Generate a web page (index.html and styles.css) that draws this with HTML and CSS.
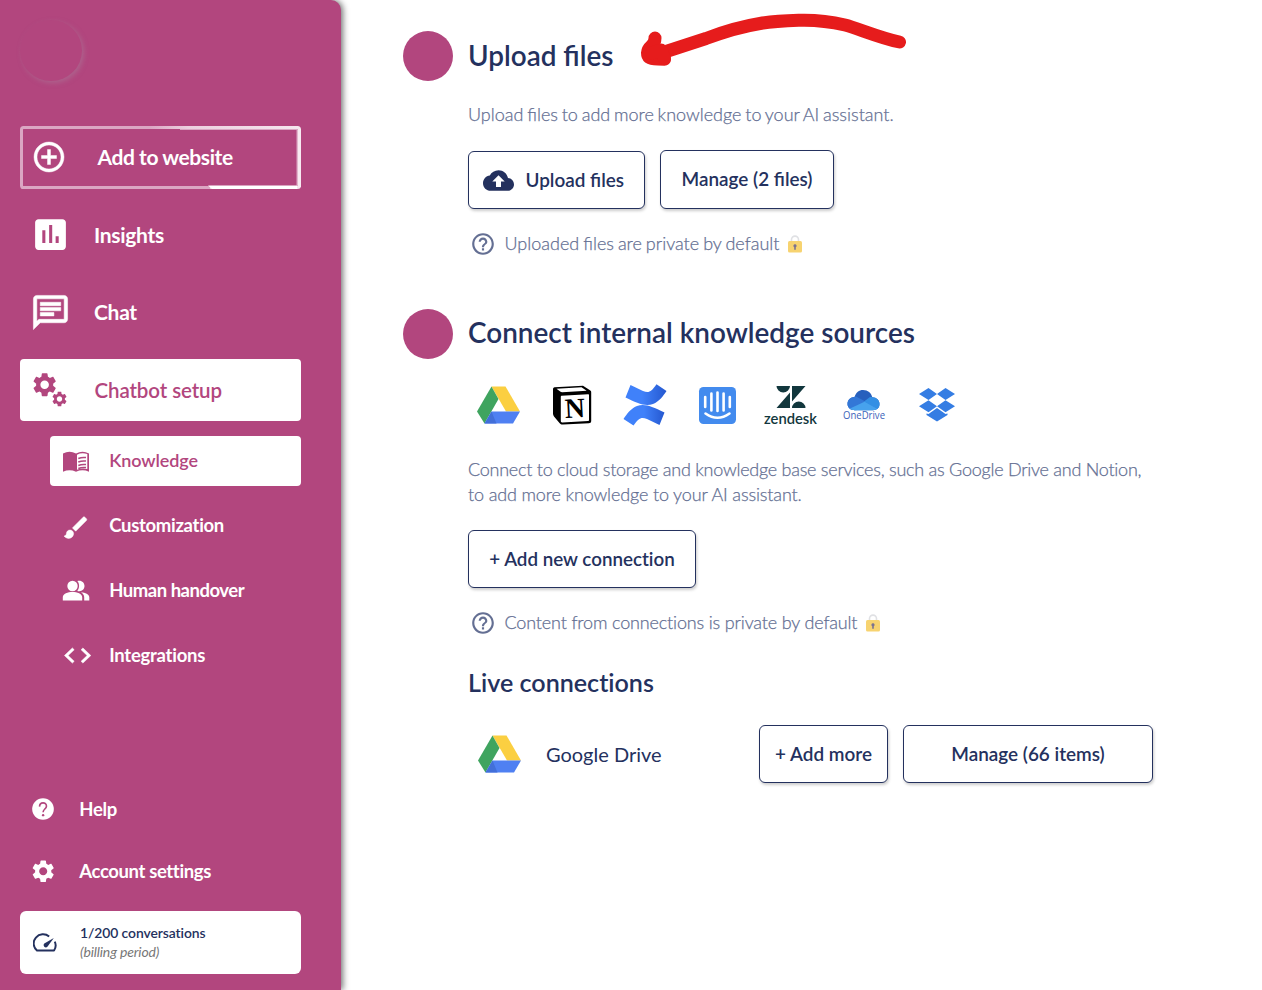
FILE: index.html
```html
<!DOCTYPE html>
<html lang="en">
<head>
<meta charset="utf-8">
<title>Knowledge</title>
<link rel="stylesheet" href="styles.css">
</head>
<body>
<svg class="defs" width="0" height="0" aria-hidden="true">
  <symbol id="gear" viewBox="0 0 24 24"><path d="M19.14 12.94c.04-.3.06-.61.06-.94 0-.32-.02-.64-.07-.94l2.03-1.58c.18-.14.23-.41.12-.61l-1.92-3.32c-.12-.22-.37-.29-.59-.22l-2.39.96c-.5-.38-1.03-.7-1.62-.94l-.36-2.54c-.04-.24-.24-.41-.48-.41h-3.84c-.24 0-.43.17-.47.41l-.36 2.54c-.59.24-1.13.57-1.62.94l-2.39-.96c-.22-.08-.47 0-.59.22L2.74 8.87c-.12.21-.08.47.12.61l2.03 1.58c-.05.3-.09.63-.09.94s.02.64.07.94l-2.03 1.58c-.18.14-.23.41-.12.61l1.92 3.32c.12.22.37.29.59.22l2.39-.96c.5.38 1.03.7 1.62.94l.36 2.54c.05.24.24.41.48.41h3.84c.24 0 .44-.17.47-.41l.36-2.54c.59-.24 1.13-.56 1.62-.94l2.39.96c.22.08.47 0 .59-.22l1.92-3.32c.12-.22.07-.47-.12-.61l-2.01-1.58zM12 15.6c-1.98 0-3.6-1.62-3.6-3.6s1.62-3.6 3.6-3.6 3.6 1.62 3.6 3.6-1.62 3.6-3.6 3.6z"/></symbol>
  <symbol id="help-outline" viewBox="0 0 24 24"><path d="M11 18h2v-2h-2v2zm1-16C6.48 2 2 6.480 2 12s4.480 10 10 10 10-4.480 10-10S17.520 2 12 2zm0 18c-4.410 0-8-3.590-8-8s3.590-8 8-8 8 3.590 8 8-3.590 8-8 8zm0-14c-2.210 0-4 1.790-4 4h2c0-1.100.9-2 2-2s2 .9 2 2c0 2-3 1.750-3 5h2c0-2.250 3-2.500 3-5 0-2.210-1.790-4-4-4z"/></symbol>
  <symbol id="lock" viewBox="0 0 14 18"><path d="M3.500 7V4.600a3.500 3.500 0 0 1 7 0V7" fill="none" stroke="#e0e1e4" stroke-width="1.600"/><rect y="6" width="14" height="11.500" rx="1.500" fill="#f7d370"/><path d="M7 9.200a1.600 1.600 0 0 1 .8 3v2.600H6.200v-2.600a1.600 1.600 0 0 1 .8-3z" fill="#7b7290"/></symbol>
  <symbol id="drive" viewBox="0 0 43 38"><path d="M14.500.5h14L43 25.500H29z" fill="#fbcf41"/><path d="M14.500.5 21.500 13 7.500 37.500 0 25.500z" fill="#3fa45f"/><path d="M14.500 25.500H43L36 37.500H7.500z" fill="#4f80f2"/><path d="m14.500 25.500 5 12h-12z" fill="#426fd9"/></symbol>
</svg>
<div class="app">
  <aside class="sidebar">
    <div class="avatar"></div>
    <nav class="nav">
      <a class="item item-add">
        <svg class="add-frame" viewBox="0 0 281 63">
          <defs><linearGradient id="frame"><stop offset="0" stop-color="#dba6c3"/><stop offset=".46" stop-color="#dba6c3"/><stop offset=".6" stop-color="#ecd0df"/><stop offset="1" stop-color="#f5e6ee"/></linearGradient></defs>
          <rect x="1.500" y="1.500" width="278" height="60" rx="2" fill="none" stroke="url(#frame)" stroke-width="3"/>
          <path d="M190 61.500H1.500" stroke="#dba6c3" stroke-width="3" fill="none"/>
          <path d="M277 4v55.500M160 3.500h117" stroke="#dba6c3" fill="none"/>
          <path d="M188 59.500h89V63h-85z" fill="#fff"/><path d="M279.200 3v58" stroke="#f7eaf1" stroke-width="3.500"/>
        </svg>
        <svg class="ico" viewBox="0 0 24 24" style="--s:36px"><path stroke="#fff" stroke-width=".3" d="M13 7h-2v4H7v2h4v4h2v-4h4v-2h-4V7zm-1-5C6.480 2 2 6.480 2 12s4.480 10 10 10 10-4.480 10-10S17.520 2 12 2zm0 18c-4.410 0-8-3.590-8-8s3.590-8 8-8 8 3.590 8 8-3.590 8-8 8z"/></svg>
        <span>Add to website</span>
      </a>
      <a class="item">
        <svg class="ico" viewBox="0 0 24 24" style="--s:41px"><path d="M19 3H5c-1.100 0-2 .9-2 2v14c0 1.100.9 2 2 2h14c1.100 0 2-.9 2-2V5c0-1.100-.9-2-2-2zM9 17H7.200V9.500H9v7.500zm4 0h-1.800V6.500H13V17zm3.800 0H15v-4h1.800v4z"/></svg>
        <span>Insights</span>
      </a>
      <a class="item item-chat">
        <svg class="ico" viewBox="0 0 24 24" style="--s:41px"><path stroke="#fff" stroke-width=".3" d="M4 4h16v12H5.170L4 17.170V4m0-2c-1.100 0-1.990.9-1.990 2L2 22l4-4h14c1.100 0 2-.9 2-2V4c0-1.100-.9-2-2-2H4zm2 10h8v2H6v-2zm0-3h12v2H6V9zm0-3h12v2H6V6z"/></svg>
        <span>Chat</span>
      </a>
      <a class="item item-active">
        <svg class="ico" viewBox="0 0 40 40" style="--s:40px"><use href="#gear" x="0.400" y="0.500" width="28.500" height="28.500"/><use href="#gear" x="20.500" y="20" width="18" height="18"/></svg>
        <span>Chatbot setup</span>
      </a>
      <div class="subnav">
        <a class="sub sub-active">
          <svg class="sub-ico" viewBox="0 0 32 32"><path d="M3 8.500q6.500-3.500 13 0 6.500-3.500 13 0v18.200q-6.500-2.800-13 0-6.500-2.800-13 0z"/><path d="M17 9.700q5-2.500 10.300-.6v14.900q-5.300-1.400-10.300.8z" fill="#fff"/><path d="M18.300 13.500q3.700-1.500 7.700-.9M18.300 17q3.700-1.500 7.700-.9M18.300 20.500q3.700-1.500 7.700-.9M18.300 23.500q3.700-1.500 7.700-.9" fill="none" stroke="#b2467e" stroke-width="1.500"/></svg>
          <span>Knowledge</span>
        </a>
        <a class="sub sub-custom">
          <svg class="sub-ico" viewBox="0 0 32 32"><path transform="translate(1.600 3.200) scale(1.200)" d="M7 14c-1.660 0-3 1.340-3 3 0 1.310-1.160 2-2 2 .92 1.220 2.490 2 4 2 2.210 0 4-1.790 4-4 0-1.660-1.340-3-3-3zm13.710-9.370l-1.340-1.340c-.39-.39-1.020-.39-1.410 0L9 12.250 11.750 15l8.960-8.960c.39-.39.39-1.020 0-1.410z" stroke="#fff" stroke-width=".4"/></svg>
          <span>Customization</span>
        </a>
        <a class="sub sub-human">
          <svg class="sub-ico" viewBox="0 0 32 32"><circle cx="12.500" cy="11" r="5.200"/><path d="M2.800 25.500v-3.300c0-3.500 5-5.300 9.700-5.300s9.700 1.800 9.700 5.300v3.300zM17.300 6.100c4-1.300 7.200 1.400 7.200 4.900s-3.200 6.200-7.200 4.900c2.400-2.700 2.400-7.100 0-9.800zM21 17.200c4.300.5 8.300 2 8.300 5v3.300h-5.100v-3.300c0-2-1.200-3.700-3.200-5z"/></svg>
          <span>Human handover</span>
        </a>
        <a class="sub">
          <svg class="sub-ico" viewBox="0 0 32 32"><path transform="translate(1.800 .4) scale(1.320 1.260)" stroke="#fff" stroke-width=".4" d="M9.400 16.600L4.800 12l4.600-4.600L8 6l-6 6 6 6 1.400-1.400zm5.200 0l4.600-4.600-4.600-4.600L16 6l6 6-6 6-1.400-1.400z"/></svg>
          <span>Integrations</span>
        </a>
      </div>
    </nav>
    <div class="bottom">
      <a class="util">
        <svg class="util-ico" viewBox="0 0 24 24"><path d="M12 2C6.480 2 2 6.480 2 12s4.480 10 10 10 10-4.480 10-10S17.520 2 12 2z"/><path d="M8.800 9.800C8.900 5 15.300 5.400 15.200 9.400c-.1 2.400-3.100 2.900-3.100 5.500" fill="none" stroke="#b2467e" stroke-width="1.500"/><circle cx="12.100" cy="17.700" r="1.100" fill="#b2467e"/></svg>
        <span>Help</span>
      </a>
      <a class="util">
        <svg class="util-ico" viewBox="0 0 26 26"><use href="#gear" x="-.3" y="-.2" width="27" height="27"/></svg>
        <span>Account settings</span>
      </a>
      <div class="usage">
        <svg class="gauge" viewBox="0 0 24 24"><path d="M15.500 5.300A9 8.800 0 0 0 3.800 18.700h16.400a9 8.800 0 0 0 .7-8.500" fill="none" stroke="#24315e" stroke-width="1.900" stroke-linejoin="round"/><path d="m20 6.800-9.200 5.300a2.100 2.100 0 1 0 3 3z" fill="#24315e"/></svg>
        <div class="usage-text">
          <div class="usage-count">1/200 conversations</div>
          <div class="usage-period">(billing period)</div>
        </div>
      </div>
    </div>
  </aside>

  <main class="main">
    <section class="section">
      <header class="head"><span class="dot"></span><h2 class="title title-upload">Upload files</h2></header>
      <div class="body">
        <p class="desc desc-upload">Upload files to add more knowledge to your AI assistant.</p>
        <div class="buttons">
          <button class="btn btn-upload">
            <svg class="cloud" viewBox="0 0 31 21"><path d="M25 8C24.100 3.400 20.200.2 15.500.2 11.700.2 8.500 2.300 6.800 5.500 2.900 6 0 9.200 0 13.200 0 17.500 3.400 20.800 7.700 20.800h16.700c3.700 0 6.600-2.900 6.600-6.400 0-3.400-2.600-6.200-6-6.400z"/><path d="M15.500 5.200 9.300 11.500H13V17h5v-5.500h3.700z" fill="#fff"/></svg>
            <span>Upload files</span>
          </button>
          <button class="btn btn-manage">Manage (2 files)</button>
        </div>
        <p class="note"><svg class="note-ico"><use href="#help-outline"/></svg><span class="note-text note-files">Uploaded files are private by default</span><svg class="lock"><use href="#lock"/></svg></p>
      </div>
      <svg class="arrow" viewBox="0 0 270 56" fill="none" stroke="#e61c1c" stroke-width="13" stroke-linecap="round" stroke-linejoin="round">
        <path d="M259.500 32C240 28 217 18 205 15 190 11.500 176 10 162 10.200 145 10.800 135 11 120 13.500 98 17 82 22.500 66 28.500L20 43.500"/>
        <path d="M15 28c0 9-7 7-7.500 15 0 5.500 6 6 10 6l7 .2"/><path d="m12 43 9-3 3.500 8.500"/>
      </svg>
    </section>

    <section class="section section-connect">
      <header class="head"><span class="dot"></span><h2 class="title title-connect">Connect internal knowledge sources</h2></header>
      <div class="body">
        <div class="logos">
          <svg class="logo" width="43" height="38"><use href="#drive"/></svg>
          <svg class="logo" width="40" height="40" viewBox="0 0 40 40"><path d="M2.500 2.200 31 .8l7 4.400c.8.500 1.200 1 1.200 2V36c0 1.400-1 2.200-2.300 2.300L11 39.600c-1.500.1-2.500-.3-3.300-1.300L2 31.500C1.300 30.500 1 29.700 1 28.500V4.300C1 3.200 1.600 2.300 2.500 2.200z"/><path d="M4.500 3.800 29.500 2.300l5.200 3.500-24.500 1.400c-1 0-1.500-.2-2-.6zM9.500 10.800l26.500-1.500c.8 0 1 .3 1 1v24.500c0 .8-.3 1.200-1 1.200l-25.600 1.400c-1 .1-1.600-.3-1.600-1.300V12c0-.8.200-1.200.7-1.200z" fill="#fff"/><text x="23" y="32.500" text-anchor="middle" class="notion-n" transform="rotate(-3 23 24)">N</text></svg>
          <svg class="logo" width="44" height="42" viewBox="0 0 44 42"><defs><linearGradient id="cf1" x1="1" x2="0"><stop stop-color="#2558d0"/><stop offset=".6" stop-color="#4081fa"/></linearGradient><linearGradient id="cf2"><stop stop-color="#4081fa"/><stop offset=".5" stop-color="#4081fa"/><stop offset="1" stop-color="#2558d0"/></linearGradient></defs><path d="M7.500 1 2.500 13.500C14 19 22 23 30 20 36.500 17.500 40 12 43.500 7L33.500.2C28 8 26 9.200 20 7z" fill="url(#cf1)"/><path d="M36.500 41 41.500 28.500C30 23 22 19 14 22 7.500 24.500 4 30 .5 35l10 6.500C16 34 18 32.800 24 35z" fill="url(#cf2)"/></svg>
          <svg class="logo" width="37" height="37" viewBox="0 0 37 37"><rect width="37" height="37" rx="4.500" fill="#438bee"/><path d="M6.200 10v10M12.400 6.500v17M18.500 5.500v18.500M24.600 6.500v17M30.800 10v10M6.500 26.500q12 8.500 24 0" fill="none" stroke="#fff" stroke-width="2.600" stroke-linecap="round"/></svg>
          <svg class="logo" width="54" height="42" viewBox="0 0 54 42"><g fill="#12373d"><path d="M12.500 2h13.500a6.750 6.500 0 0 1-13.500 0zM26 8.500V24H12.500zM28 2H41.500L28 17.500zM28 24a6.750 6.500 0 0 1 13.500 0z"/></g><text x="0" y="39.500" class="zendesk" textLength="53" lengthAdjust="spacingAndGlyphs">zendesk</text></svg>
          <svg class="logo" width="46" height="36" viewBox="-1 -2 46 36"><defs><clipPath id="cloud-shape"><path d="M13 21.200C8.500 21.200 5.500 18.500 5.500 15c0-4 3-6.800 7-7C14 3.500 17 1 21 1c5 0 8.200 3 9.300 7.300 4.200.2 7.200 3 7.200 6.700 0 4-2.700 6.200-6.500 6.200z"/></clipPath></defs><g clip-path="url(#cloud-shape)"><path d="M0 0h44v22H0z" fill="#2760bd"/><path d="M5 7.500h9L28 15 13 22H4z" fill="#3377d7"/><path d="m7 20 16-7.500L39 21v2H7z" fill="#47a2ed"/><path d="m22 12.500 6-4.500h11v14z" fill="#338fe4"/></g><text x="1" y="30" class="onedrive" textLength="42" lengthAdjust="spacingAndGlyphs">OneDrive</text></svg>
          <svg class="logo" width="36" height="34" viewBox="0 0 36 34"><path d="M9.500 0 18 6l-8.500 6L0 6zM26.500 0 36 6l-9.500 6L18 6zM9.500 12.300 18 18.300l-8.500 6-9.500-6zM26.500 12.300l9.500 6-9.500 6-8.500-6zM7.500 25.500l2 .5 8.500-6 8.500 6 2-.5v1.500L18 33.500l-10.500-6.500z" fill="#357de3"/></svg>
        </div>
        <p class="desc desc-connect"><span class="line-first">Connect to cloud storage and knowledge base services, such as Google Drive and Notion,</span><br><span class="line-last">to add more knowledge to your AI assistant.</span></p>
        <div class="buttons"><button class="btn btn-new">+ Add new connection</button></div>
        <p class="note"><svg class="note-ico"><use href="#help-outline"/></svg><span class="note-text note-connections">Content from connections is private by default</span><svg class="lock"><use href="#lock"/></svg></p>
        <h3 class="live">Live connections</h3>
        <div class="connection">
          <svg class="conn-logo"><use href="#drive"/></svg>
          <span class="conn-name">Google Drive</span>
          <button class="btn btn-more">+ Add more</button>
          <button class="btn btn-items">Manage (66 items)</button>
        </div>
      </div>
    </section>
  </main>
</div>
</body>
</html>
```

FILE: styles.css
```css
* { box-sizing: border-box; }
body {
  margin: 0;
  background: #fff;
  color: #24315e;
  font-family: Lato, "Liberation Sans", sans-serif;
  overflow: hidden;
}
.defs { position: absolute; }
.app { display: flex; height: 990px; }

.sidebar {
  display: flex;
  flex-direction: column;
  flex: none;
  width: 341px;
  padding: 20px 40px 16px 20px;
  border-radius: 0 10px 0 0;
  background: #b2467e;
  box-shadow: 2px 0 6px rgba(0, 0, 0, .55);
  color: #fff;
}
.avatar {
  width: 62px;
  height: 61px;
  border-radius: 50%;
  background: #b2467e;
  box-shadow: 2px 2px 5px rgba(170, 125, 155, .5);
}
.nav { display: flex; flex-direction: column; gap: 15.5px; margin-top: 45px; }
.item {
  position: relative;
  display: flex;
  align-items: center;
  height: 62px;
  padding-left: 9.500px;
  border-radius: 4px;
  font-size: 21px;
  font-weight: 700;
  letter-spacing: -.3px;
}
.item span { margin-left: 23.500px; }
.item-add { height: 63px; margin-bottom: -1px; padding-bottom: 1px; letter-spacing: -.42px; }
.item-add .ico { margin-left: 1.500px; }
.item-add .ico + span { margin-left: 30.500px; padding-bottom: 2px; }
.item-chat span { padding-bottom: 2px; }
.add-frame { position: absolute; left: 0; top: 0; width: 281px; height: 63px; }
.ico { flex: none; width: var(--s); height: var(--s); fill: currentColor; }
.item-active { background: #fff; color: #b2467e; font-size: 20.500px; font-weight: 600; letter-spacing: -.1px; }
.item-active span { margin-left: 25px; padding-top: 1px; }

.subnav { display: flex; flex-direction: column; gap: 15px; padding-left: 30px; }
.sub {
  display: flex;
  align-items: center;
  height: 50px;
  padding-left: 10px;
  border-radius: 4px;
  font-size: 18.500px;
  font-weight: 700;
  letter-spacing: -.25px;
}
.sub-custom { letter-spacing: -.3px; }
.sub-human { letter-spacing: -.48px; }
.sub-ico { width: 32px; height: 32px; fill: currentColor; }
.sub span { margin-left: 17.200px; padding-bottom: 2px; }
.sub-active { background: #fff; color: #b2467e; font-size: 18px; font-weight: 600; letter-spacing: -.1px; }

.bottom { margin-top: auto; }
.util {
  display: flex;
  align-items: center;
  height: 62px;
  padding-left: 9.500px;
  gap: 23.800px;
  font-size: 18.500px;
  font-weight: 700;
  letter-spacing: -.37px;
}
.util-ico { width: 26px; height: 26px; fill: currentColor; }
.usage {
  display: flex;
  align-items: center;
  height: 63px;
  margin-top: 9px;
  padding-left: 12.500px;
  border-radius: 6px;
  background: #fff;
  color: #24315e;
}
.gauge { width: 25px; height: 25px; margin-top: 1px; }
.usage-text { margin-left: 22.500px; padding-bottom: 1px; line-height: 19px; }
.usage-count { font-size: 13.900px; font-weight: 600; letter-spacing: -.08px; }
.usage-period { color: #777; font-size: 14px; font-style: italic; letter-spacing: -.15px; }

.main { position: relative; flex: 1; padding: 31px 0 0 62px; }
.section-connect { margin-top: 52px; }
.head { display: flex; align-items: center; gap: 15px; }
.dot { width: 50px; height: 50px; border-radius: 50%; background: #b2467e; }
.title { margin: 0; padding-bottom: 3px; font-size: 27.900px; font-weight: 600; line-height: 34px; }
.title-connect { padding-bottom: 5px; }
.body { padding-left: 65px; }
.desc {
  margin: 21px 0 23px;
  color: #646f93;
  font-size: 18px;
  font-weight: 300;
  line-height: 25px;
  -webkit-text-stroke: .25px currentColor;
}
.desc-upload { word-spacing: -1.100px; }
.line-first { letter-spacing: -.25px; }
.line-last { letter-spacing: -.14px; }
.section-connect .desc { margin-top: 22px; }
.buttons { display: flex; align-items: flex-end; gap: 15px; }
.btn {
  height: 58px;
  padding: 0 0 2px;
  border: 1px solid #24315e;
  border-radius: 6px;
  background: #fff;
  box-shadow: 1px 2px 3px rgba(0, 0, 0, .2);
  color: #24315e;
  font: 600 18.900px Lato, sans-serif;
  white-space: nowrap;
}
.btn-upload { display: flex; align-items: center; gap: 11.500px; width: 177px; padding: 0 0 0 14px; }
.btn-upload span { padding-bottom: 2px; }
.cloud { width: 31px; height: 21px; fill: #24315e; }
.btn-manage { width: 174px; height: 59px; }
.btn-new { width: 228px; font-variant-ligatures: none; font-size: 18.800px; }
.note {
  display: flex;
  align-items: center;
  height: 26px;
  margin: 22px 0 0 2px;
  color: #646f93;
  font-size: 18px;
  font-weight: 300;
  -webkit-text-stroke: .25px currentColor;
}
.note-text { padding-bottom: 2px; }
.note-files { word-spacing: -.9px; }
.note-connections { letter-spacing: -.16px; }
.note-ico { width: 26px; height: 26px; margin-right: 8.500px; fill: #646f93; -webkit-text-stroke: 0; }
.lock { width: 14px; height: 18px; margin-left: 8.500px; }
.logos { display: grid; grid-template-columns: repeat(7, 73px); place-items: center; height: 60px; margin: 16px 0 0 -5.600px; }
.logo { overflow: visible; }
.notion-n { font: bold 28px "Liberation Serif", serif; }
.zendesk { font: 600 14.500px Lato, sans-serif; fill: #12373d; }
.onedrive { font: 400 11px "Open Sans", sans-serif; fill: #3c62ba; }
.live { margin: 31px 0 0; padding-bottom: 1px; font-size: 25.100px; font-weight: 600; line-height: 30px; font-variant-ligatures: none; }
.connection { display: flex; align-items: center; margin-top: 27px; }
.conn-logo { width: 43px; height: 38px; margin-left: 10px; }
.conn-name { width: 213px; margin-left: 25px; font-size: 20px; }
.btn-more { width: 129px; }
.btn-items { width: 250px; margin-left: 15px; }
.arrow { position: absolute; left: 299px; top: 10px; width: 270px; height: 56px; overflow: visible; }
```
